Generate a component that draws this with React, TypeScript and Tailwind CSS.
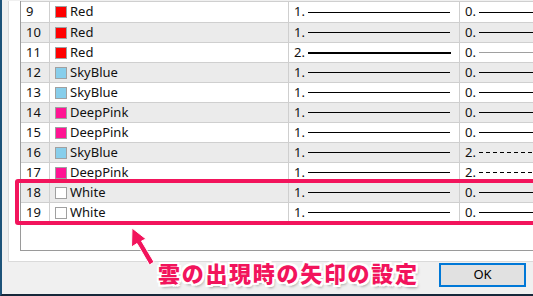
import React from 'react';

type Row = {
  n: number;
  color: string;
  name: string;
  w1: string;
  l1: 'thin' | 'thick';
  w2: string;
  l2: 'solid' | 'gray' | 'dash';
};

const rows: Row[] = [
  { n: 9, color: '#ff0000', name: 'Red', w1: '1.', l1: 'thin', w2: '0.', l2: 'solid' },
  { n: 10, color: '#ff0000', name: 'Red', w1: '1.', l1: 'thin', w2: '0.', l2: 'solid' },
  { n: 11, color: '#ff0000', name: 'Red', w1: '2.', l1: 'thick', w2: '0.', l2: 'gray' },
  { n: 12, color: '#87ceeb', name: 'SkyBlue', w1: '1.', l1: 'thin', w2: '0.', l2: 'solid' },
  { n: 13, color: '#87ceeb', name: 'SkyBlue', w1: '1.', l1: 'thin', w2: '0.', l2: 'solid' },
  { n: 14, color: '#ff1493', name: 'DeepPink', w1: '1.', l1: 'thin', w2: '0.', l2: 'solid' },
  { n: 15, color: '#ff1493', name: 'DeepPink', w1: '1.', l1: 'thin', w2: '0.', l2: 'solid' },
  { n: 16, color: '#87ceeb', name: 'SkyBlue', w1: '1.', l1: 'thin', w2: '2.', l2: 'dash' },
  { n: 17, color: '#ff1493', name: 'DeepPink', w1: '1.', l1: 'thin', w2: '2.', l2: 'dash' },
  { n: 18, color: '#ffffff', name: 'White', w1: '1.', l1: 'thin', w2: '0.', l2: 'solid' },
  { n: 19, color: '#ffffff', name: 'White', w1: '1.', l1: 'thin', w2: '0.', l2: 'solid' },
];

const LineCell = ({ kind }: { kind: Row['l2'] | Row['l1'] }) => {
  if (kind === 'thick') return <div className="h-[2px] w-[143px] bg-black" />;
  if (kind === 'thin') return <div className="h-px w-[142px] bg-black" />;
  if (kind === 'gray') return <div className="h-px flex-1 bg-[#a0a0a0]" />;
  if (kind === 'dash')
    return <div className="h-px flex-1 bg-[repeating-linear-gradient(90deg,#000_0_4px,transparent_4px_7px)]" />;
  return <div className="h-px flex-1 bg-black" />;
};

const TableRow = ({ row, idx }: { row: Row; idx: number }) => (
  <div
    className={`grid grid-cols-[29px_239px_171px_1fr] border-b border-[#cfcfcf] ${
      idx === 0 ? 'h-[21px]' : 'h-[20px]'
    } ${idx % 2 === 1 ? 'bg-[#ebebeb]' : 'bg-white'}`}
  >
    <div className="flex items-center border-r border-[#cfcfcf] pl-[5px]">{row.n}</div>
    <div className="flex items-center border-r border-[#cfcfcf] pl-[5px]">
      <span className="h-[12px] w-[12px] shrink-0 border border-[#a0a0a0]" style={{ background: row.color }} />
      <span className="ml-[3px]">{row.name}</span>
    </div>
    <div className="flex items-center border-r border-[#cfcfcf] pl-[5px]">
      <span className="w-[14px] shrink-0">{row.w1}</span>
      <LineCell kind={row.l1} />
    </div>
    <div className="flex items-center pl-[5px]">
      <span className="w-[14px] shrink-0">{row.w2}</span>
      <LineCell kind={row.l2} />
    </div>
  </div>
);

export default function App() {
  return (
    <div className="relative h-[296px] w-[533px] overflow-hidden border-b-2 border-l-2 border-b-[#16283a] border-l-[#1d5379] bg-[#f0f0f0] font-['Noto_Sans','Liberation_Sans',sans-serif] text-[13px] text-[#111]">
      {/* panel */}
      <div className="ml-[6px] h-[261px] w-[560px] border-b border-l border-[#dadada] bg-white pl-[11px]">
        <div className="h-[250px] w-[560px] border-b border-l border-[#9a9a9a]">
          <div className="mt-[1px] border-t border-[#cfcfcf]">
            {rows.map((r, i) => (
              <TableRow key={r.n} row={r} idx={i} />
            ))}
          </div>
        </div>
      </div>

      {/* buttons */}
      <div className="mt-px flex justify-end pr-[7px]">
        <button className="flex h-[24px] w-[87px] items-center justify-center border-2 border-[#0078d7] bg-[#e1e1e1] font-['Noto_Sans',sans-serif] text-[13px] text-black">
          OK
        </button>
      </div>

      {/* annotation box */}
      <div className="absolute left-[13px] top-[179px] h-[46px] w-[560px] rounded-[3px] border-4 border-[#f2145c]" />

      {/* annotation arrow */}
      <svg className="absolute left-0 top-0" width="533" height="296" viewBox="0 0 533 296">
        <path
          d="M130 228 L144 239 L139.5 241 L152 262 L147.5 265 L135 243.5 L129.5 247 Z"
          fill="#f2145c"
          stroke="#fff"
          strokeWidth="1"
          strokeLinejoin="round"
        />
      </svg>

      {/* annotation text */}
      <div className="absolute left-[156px] top-[261px] font-['Noto_Sans_CJK_JP',sans-serif] text-[22px] font-black leading-none tracking-[1.7px] text-[#f2145c] [text-shadow:2px_0_0_#fff,-2px_0_0_#fff,0_2px_0_#fff,0_-2px_0_#fff,2px_2px_0_#fff,-2px_-2px_0_#fff,2px_-2px_0_#fff,-2px_2px_0_#fff,2px_3px_3px_rgba(0,0,0,0.35)]">
        雲の出現時の矢印の設定
      </div>
    </div>
  );
}
